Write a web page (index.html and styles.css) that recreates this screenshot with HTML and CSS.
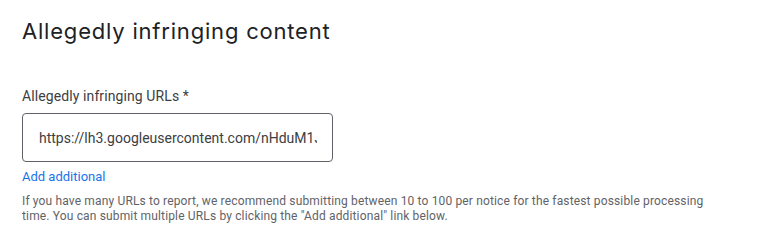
FILE: index.html
```html
<!DOCTYPE html>
<html lang="en">
<head>
<meta charset="utf-8">
<link rel="stylesheet" href="styles.css">
</head>
<body>
<main class="section">
  <h2 class="title">Allegedly infringing content</h2>
  <div class="field">
    <label class="label" for="url1">Allegedly infringing URLs *</label>
    <div class="input-box">
      <input id="url1" class="input" type="text" value="https://lh3.googleusercontent.com/nHduM1JxQz7kP">
    </div>
    <a class="add-link" href="#">Add additional</a>
    <p class="help">If you have many URLs to report, we recommend submitting between 10 to 100 per notice for the fastest possible processing time. You can submit multiple URLs by clicking the "Add additional" link below.</p>
  </div>
</main>
</body>
</html>
```
FILE: styles.css
```css
html, body {
  margin: 0;
  padding: 0;
  background: #ffffff;
}
body {
  font-family: Roboto, "Liberation Sans", Arial, sans-serif;
  color: #202124;
}
.section {
  padding: 15px 22px 0 22px;
}
.title {
  margin: 0;
  font-family: Inter, Roboto, "Liberation Sans", sans-serif;
  font-weight: 400;
  font-size: 22px;
  line-height: 32px;
  letter-spacing: 0.8px;
  color: #202124;
}
.field {
  margin-top: 39px;
  display: flex;
  flex-direction: column;
  align-items: flex-start;
}
.label {
  font-size: 14px;
  line-height: 20px;
  letter-spacing: 0.1px;
  color: #3c4043;
}
.input-box {
  margin-top: 7px;
  height: 47px;
  border: 1px solid #5f6368;
  border-radius: 4px;
  display: flex;
  align-items: center;
  padding: 0 15px 0 16px;
  box-sizing: content-box;
  width: 278px;
}
.input {
  width: 100%;
  border: none;
  outline: none;
  padding: 0;
  margin: 0;
  background: transparent;
  font-family: Roboto, "Liberation Sans", sans-serif;
  font-size: 14px;
  color: #3c4043;
}
.add-link {
  margin-top: 6px;
  font-size: 13px;
  line-height: 18px;
  color: #1a73e8;
  text-decoration: none;
}
.help {
  margin: 8px 0 0 0;
  max-width: 690px;
  font-size: 12px;
  line-height: 15px;
  letter-spacing: 0.15px;
  color: #5f6368;
}
```
